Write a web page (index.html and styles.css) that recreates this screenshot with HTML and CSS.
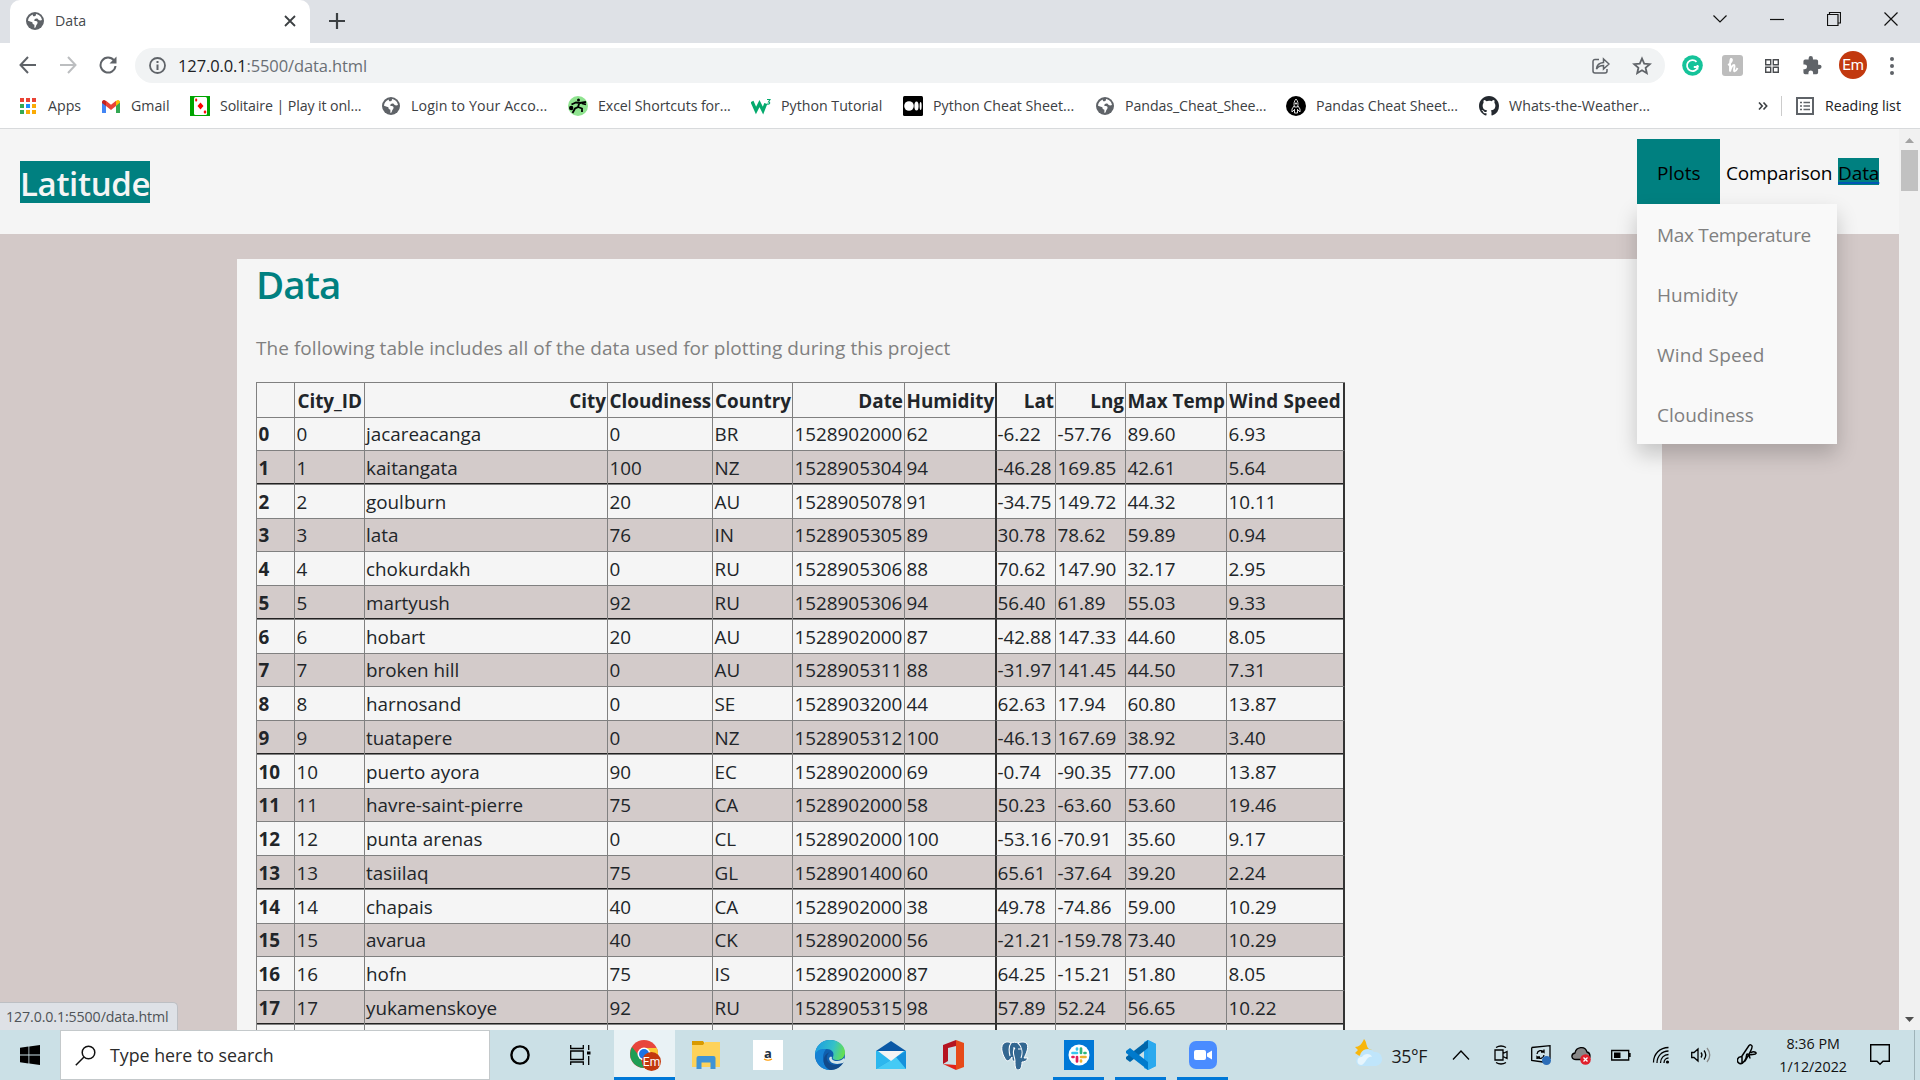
FILE: index.html
```html
<!DOCTYPE html>
<html lang="en">
<head>
<meta charset="utf-8">
<title>Data</title>
<link rel="stylesheet" href="styles.css">
</head>
<body>
<svg width="0" height="0" class="defs">
  <symbol id="globe" viewBox="0 0 18 18"><circle cx="9" cy="9" r="9" fill="#5f6368"/><path d="M10 2c3 .3 5.600 3 6 6-2 .8-3.500.3-4.200-1-.8-1-2.500-.4-3.300.4-.8 1 .2 1.600 1.300 1.700 1.500.1 2.200.9 1.600 2.400-.5 1.200-1.200 1.300-1.500 2.800-.1 1-.7 1.700-1.500 1.700v-3.200c-1.800-.6-2-1.500-2-2.600L2 8.800C2 6 4 3.200 7 2.400 6.400 4 7.600 4.600 8.600 4.300 9.800 4 10 3 10 2z" fill="#fff"/></symbol>
</svg>
<div class="screen">
  <header class="tabstrip">
    <div class="tab">
      <svg class="tab-icon" width="18" height="18"><use href="#globe"/></svg>
      <span class="tab-title">Data</span>
      <svg width="12" height="12" viewBox="0 0 12 12" stroke="#3c4043" stroke-width="1.800"><path d="M1 1l10 10M11 1L1 11"/></svg>
    </div>
    <svg class="newtab" width="16" height="16" viewBox="0 0 16 16" stroke="#3c4043" stroke-width="2.200"><path d="M8 0v16M0 8h16"/></svg>
    <div class="window-buttons">
      <svg width="14" height="14" viewBox="0 0 14 14"><path d="M.5 3.500L7 10l6.500-6.500"/></svg>
      <svg width="14" height="14" viewBox="0 0 14 14"><path d="M0 7.500h14"/></svg>
      <svg width="14" height="14" viewBox="0 0 14 14"><path d="M.5 2.500h10.500v11H.5zM2.500 2.500V.5h11V11H11"/></svg>
      <svg width="14" height="14" viewBox="0 0 14 14"><path d="M.5.5l13 13M13.500.5l-13 13"/></svg>
    </div>
  </header>

  <div class="toolbar">
    <svg class="back" width="18" height="18" viewBox="0 0 18 18"><path d="M17 9H2M9 1L1.500 9 9 17"/></svg>
    <svg class="forward" width="18" height="18" viewBox="0 0 18 18"><path d="M1 9h15M9 1l7.500 8L9 17"/></svg>
    <svg class="reload" width="18" height="18" viewBox="0 0 18 18"><path d="M15 4.500A7.500 7.500 0 1 0 16.500 10"/><path d="M17.500.5v7h-7z" class="solid"/></svg>
    <div class="omnibox">
      <svg width="17" height="17" viewBox="0 0 17 17"><circle cx="8.500" cy="8.500" r="7.500" fill="none" stroke="#5f6368" stroke-width="1.800"/><path d="M7.500 4h2v2h-2zM7.500 7.500h2V13h-2z" fill="#5f6368"/></svg>
      <span class="url"><b>127.0.0.1</b>:5500/data.html</span>
      <svg class="share" width="18" height="18" viewBox="0 0 18 18"><path d="M7 2.500H3a2 2 0 0 0-2 2V14a2 2 0 0 0 2 2h10a2 2 0 0 0 2-2v-2M4.500 12c.3-4 2.500-6.200 7-6.500V2l5.500 5-5.500 5V8.500c-3.500 0-5.500 1.200-7 3.500z"/></svg>
      <svg class="star" width="20" height="20" viewBox="0 0 20 20"><path d="M10 2.500l2.200 5.100 5.600.5-4.200 3.700 1.200 5.400-4.800-2.900-4.800 2.900 1.200-5.400-4.200-3.700 5.600-.5z"/></svg>
    </div>
    <svg class="ext" width="21" height="21" viewBox="0 0 21 21"><circle cx="10.500" cy="10.500" r="10.300" fill="#15c39a"/><path d="M14.500 6.800A5.500 5.500 0 1 0 15.800 12h-4M15.500 10v4.500" fill="none" stroke="#fff" stroke-width="1.800"/></svg>
    <svg class="ext" width="21" height="21" viewBox="0 0 21 21"><rect width="21" height="21" rx="3" fill="#bdbdbd"/><path d="M6 10c2-1 5-5 3.500-6S8 9 8 16.500c1-4 2.500-6.500 4-6.500s-1 6 .5 6.200S15 14 15.500 13" fill="none" stroke="#fff" stroke-width="1.900"/></svg>
    <svg class="ext" width="14" height="14" viewBox="0 0 14 14" fill="none" stroke="#4a4d50" stroke-width="1.400"><path d="M.7.7h5v5h-5zM8.300.7h5v5h-5zM.7 8.300h5v5h-5zM8.300 8.300h5v5h-5z"/></svg>
    <svg class="ext" width="19" height="19" viewBox="2 1 21 22"><path fill="#5f6368" d="M20.500 11H19V7a2 2 0 0 0-2-2h-4V3.500a2.500 2.500 0 0 0-5 0V5H4a2 2 0 0 0-2 2v3.800h1.500a2.700 2.700 0 0 1 0 5.400H2V20a2 2 0 0 0 2 2h3.800v-1.500a2.700 2.700 0 0 1 5.400 0V22H17a2 2 0 0 0 2-2v-4h1.500a2.500 2.500 0 0 0 0-5z"/></svg>
    <span class="avatar">Em</span>
    <svg class="dots" width="4" height="18" viewBox="0 0 4 18" fill="#5f6368"><circle cx="2" cy="2" r="2"/><circle cx="2" cy="9" r="2"/><circle cx="2" cy="16" r="2"/></svg>
  </div>

  <nav class="bookmarks">
    <a class="bm apps"><svg width="20" height="20" viewBox="0 0 20 20"><path fill="#ea4335" d="M2 2h4v4H2zM8 2h4v4H8zM14 2h4v4h-4z"/><path fill="#34a853" d="M2 8h4v4H2zM2 14h4v4H2z"/><path fill="#1a8cff" d="M8 8h4v4H8z"/><path fill="#fbab05" d="M14 8h4v4h-4zM8 14h4v4H8zM14 14h4v4h-4z"/></svg><span>Apps</span></a>
    <a class="bm gmail"><svg width="20" height="20" viewBox="0 0 20 20"><path fill="#4285f4" d="M1 5v12h4V9z"/><path fill="#34a853" d="M15 9v8h4V5z"/><path fill="#fbbc04" d="M15 5c2-2 4-1 4 1.500L15 10z"/><path fill="#c5221f" d="M1 6.500C1 4 3 3 5 5v5L1 7z"/><path fill="#ea4335" d="M5 4.800l5 3.900 5-3.900V10l-5 4-5-4z"/></svg><span>Gmail</span></a>
    <a class="bm solitaire"><svg width="20" height="20" viewBox="0 0 20 20"><path fill="#00a400" d="M0 0h20v20H0z"/><rect x="4" y="1" width="13" height="18" rx="1.500" fill="#fff"/><path fill="#f00" d="M10.500 6.500l3 3.500-3 3.500-3-3.500zM6 2l1.500 2L6 6 5 4zM15 14l1.500 2-1.500 2-1.500-2z"/></svg><span>Solitaire | Play it onl...</span></a>
    <a class="bm login"><svg width="20" height="20" viewBox="0 0 20 20"><use href="#globe" x="1" y="1" width="18" height="18"/></svg><span>Login to Your Acco...</span></a>
    <a class="bm excel"><svg width="20" height="20" viewBox="0 0 20 20"><circle cx="10" cy="10" r="10" fill="#8fe38f"/><circle cx="3.200" cy="12" r="2.200"/><circle cx="10.500" cy="4" r="1.500"/><path d="M3.500 8.500L8 6.500l4 .5 6-1M14 7.500l4 1M11.500 6.500L10 11l-3 1.500L4.500 17M10 11l4 1.500v3.500" stroke="#000" stroke-width="1.800" fill="none"/></svg><span>Excel Shortcuts for...</span></a>
    <a class="bm w3"><svg width="20" height="20" viewBox="0 0 20 20"><path d="M1 5.500l4 9 3.500-7 3.500 7 2.800-7" fill="none" stroke="#04aa6d" stroke-width="3.200"/><path d="M16 3.500h3L17.500 6c2 0 1.500 2.500-1.500 2" fill="none" stroke="#04aa6d" stroke-width="1.100"/></svg><span>Python Tutorial</span></a>
    <a class="bm medium"><svg width="20" height="20" viewBox="0 0 20 20"><rect width="20" height="20" rx="1.500"/><circle cx="6" cy="10" r="4.800" fill="#fff"/><ellipse cx="13.500" cy="10" rx="2.100" ry="4.600" fill="#fff"/><ellipse cx="17.600" cy="10" rx="1" ry="4" fill="#fff"/></svg><span>Python Cheat Sheet...</span></a>
    <a class="bm pdf"><svg width="20" height="20" viewBox="0 0 20 20"><use href="#globe" x="1" y="1" width="18" height="18"/></svg><span>Pandas_Cheat_Shee...</span></a>
    <a class="bm pandas"><svg width="20" height="20" viewBox="0 0 20 20"><circle cx="10" cy="10" r="10"/><path d="M10 3c2 2 2.500 5 1.500 8h-3C7.500 8 8 5 10 3zM8 10l-2 3v3l2-2M12 10l2 3v3l-2-2M8.500 13v4h3v-4" fill="none" stroke="#ddd"/><circle cx="10" cy="7.500" r="1.100" fill="#ddd"/></svg><span>Pandas Cheat Sheet...</span></a>
    <a class="bm github"><svg width="20" height="20" viewBox="0 0 16 16"><path fill="#24292f" fill-rule="evenodd" d="M8 0C3.580 0 0 3.580 0 8c0 3.540 2.290 6.530 5.470 7.590.4.070.55-.17.55-.38 0-.19-.01-.82-.01-1.490-2.010.37-2.530-.49-2.690-.94-.09-.23-.48-.94-.82-1.130-.28-.15-.68-.52-.01-.53.63-.01 1.080.58 1.230.82.72 1.210 1.870.87 2.330.66.070-.52.280-.87.510-1.070-1.780-.2-3.640-.89-3.640-3.950 0-.87.310-1.590.82-2.150-.08-.2-.36-1.020.08-2.120 0 0 .67-.21 2.200.82A7.600 7.600 0 0 1 8 3.860c.68 0 1.360.09 2 .27 1.530-1.040 2.200-.82 2.200-.82.44 1.100.16 1.920.08 2.120.51.56.82 1.270.82 2.150 0 3.070-1.870 3.750-3.650 3.950.29.25.54.73.54 1.480 0 1.070-.01 1.930-.01 2.200 0 .21.15.46.55.38A8.010 8.010 0 0 0 16 8c0-4.420-3.580-8-8-8z"/></svg><span>Whats-the-Weather...</span></a>
    <svg class="more" width="10" height="8" viewBox="0 0 10 8" fill="none" stroke="#3c4043" stroke-width="1.600"><path d="M1 .5L4.200 4 1 7.500M5.500.5L8.700 4 5.500 7.500"/></svg>
    <a class="bm reading"><svg width="20" height="20" viewBox="0 0 20 20"><path d="M2 2h16v16H2z" fill="none" stroke="#5f6368" stroke-width="2"/><path d="M5 6.500h2M8.500 6.500H15M5 10h2M8.500 10H15M5 13.500h2M8.500 13.500H15" stroke="#5f6368" stroke-width="1.700"/></svg><span>Reading list</span></a>
  </nav>

  <div class="viewport">
    <div class="page">
      <div class="site-nav">
        <span class="brand">Latitude</span>
        <div class="links">
          <div class="dropdown">
            <div class="plots">Plots</div>
            <div class="menu"><a class="temperature">Max Temperature</a><a>Humidity</a><a class="wind">Wind Speed</a><a>Cloudiness</a></div>
          </div>
          <a class="comparison">Comparison</a>
          <a class="current">Data</a>
        </div>
      </div>
      <main class="container">
        <h1>Data</h1>
        <p>The following table includes all of the data used for plotting during this project</p>
        <table>
          <thead><tr><th></th><th>City_ID</th><th>City</th><th>Cloudiness</th><th>Country</th><th>Date</th><th>Humidity</th><th>Lat</th><th>Lng</th><th>Max Temp</th><th>Wind Speed</th></tr></thead>
          <tbody>
          <tr><th>0</th><td>0</td><td>jacareacanga</td><td>0</td><td>BR</td><td>1528902000</td><td>62</td><td>-6.22</td><td>-57.76</td><td>89.60</td><td>6.93</td></tr>
          <tr><th>1</th><td>1</td><td>kaitangata</td><td>100</td><td>NZ</td><td>1528905304</td><td>94</td><td>-46.28</td><td>169.85</td><td>42.61</td><td>5.64</td></tr>
          <tr><th>2</th><td>2</td><td>goulburn</td><td>20</td><td>AU</td><td>1528905078</td><td>91</td><td>-34.75</td><td>149.72</td><td>44.32</td><td>10.11</td></tr>
          <tr><th>3</th><td>3</td><td>lata</td><td>76</td><td>IN</td><td>1528905305</td><td>89</td><td>30.78</td><td>78.62</td><td>59.89</td><td>0.94</td></tr>
          <tr><th>4</th><td>4</td><td>chokurdakh</td><td>0</td><td>RU</td><td>1528905306</td><td>88</td><td>70.62</td><td>147.90</td><td>32.17</td><td>2.95</td></tr>
          <tr><th>5</th><td>5</td><td>martyush</td><td>92</td><td>RU</td><td>1528905306</td><td>94</td><td>56.40</td><td>61.89</td><td>55.03</td><td>9.33</td></tr>
          <tr><th>6</th><td>6</td><td>hobart</td><td>20</td><td>AU</td><td>1528902000</td><td>87</td><td>-42.88</td><td>147.33</td><td>44.60</td><td>8.05</td></tr>
          <tr><th>7</th><td>7</td><td>broken hill</td><td>0</td><td>AU</td><td>1528905311</td><td>88</td><td>-31.97</td><td>141.45</td><td>44.50</td><td>7.31</td></tr>
          <tr><th>8</th><td>8</td><td>harnosand</td><td>0</td><td>SE</td><td>1528903200</td><td>44</td><td>62.63</td><td>17.94</td><td>60.80</td><td>13.87</td></tr>
          <tr><th>9</th><td>9</td><td>tuatapere</td><td>0</td><td>NZ</td><td>1528905312</td><td>100</td><td>-46.13</td><td>167.69</td><td>38.92</td><td>3.40</td></tr>
          <tr><th>10</th><td>10</td><td>puerto ayora</td><td>90</td><td>EC</td><td>1528902000</td><td>69</td><td>-0.74</td><td>-90.35</td><td>77.00</td><td>13.87</td></tr>
          <tr><th>11</th><td>11</td><td>havre-saint-pierre</td><td>75</td><td>CA</td><td>1528902000</td><td>58</td><td>50.23</td><td>-63.60</td><td>53.60</td><td>19.46</td></tr>
          <tr><th>12</th><td>12</td><td>punta arenas</td><td>0</td><td>CL</td><td>1528902000</td><td>100</td><td>-53.16</td><td>-70.91</td><td>35.60</td><td>9.17</td></tr>
          <tr><th>13</th><td>13</td><td>tasiilaq</td><td>75</td><td>GL</td><td>1528901400</td><td>60</td><td>65.61</td><td>-37.64</td><td>39.20</td><td>2.24</td></tr>
          <tr><th>14</th><td>14</td><td>chapais</td><td>40</td><td>CA</td><td>1528902000</td><td>38</td><td>49.78</td><td>-74.86</td><td>59.00</td><td>10.29</td></tr>
          <tr><th>15</th><td>15</td><td>avarua</td><td>40</td><td>CK</td><td>1528902000</td><td>56</td><td>-21.21</td><td>-159.78</td><td>73.40</td><td>10.29</td></tr>
          <tr><th>16</th><td>16</td><td>hofn</td><td>75</td><td>IS</td><td>1528902000</td><td>87</td><td>64.25</td><td>-15.21</td><td>51.80</td><td>8.05</td></tr>
          <tr><th>17</th><td>17</td><td>yukamenskoye</td><td>92</td><td>RU</td><td>1528905315</td><td>98</td><td>57.89</td><td>52.24</td><td>56.65</td><td>10.22</td></tr>
          <tr><th></th><td></td><td></td><td></td><td></td><td></td><td></td><td></td><td></td><td></td><td></td></tr>
          </tbody>
        </table>
      </main>
    </div>
    <div class="scrollbar">
      <svg width="9" height="5" viewBox="0 0 9 5" fill="#a3a3a3"><path d="M0 5l4.500-5L9 5z"/></svg>
      <div class="thumb"></div>
      <svg class="down" width="9" height="5" viewBox="0 0 9 5" fill="#505050"><path d="M0 0l4.500 5L9 0z"/></svg>
    </div>
    <div class="status">127.0.0.1:5500/data.html</div>
  </div>

  <footer class="taskbar">
    <div class="start"><svg width="20" height="20" viewBox="0 0 20 20"><path d="M0 2.800l8.500-1.200v8H0zM9.300 1.500L20 0v9.600H9.300zM0 10.400h8.500v8L0 17.200zM9.300 10.400H20V20L9.300 18.500z"/></svg></div>
    <div class="search"><svg width="21" height="21" viewBox="0 0 21 21" fill="none" stroke="#111" stroke-width="1.500"><circle cx="13.500" cy="7.500" r="6.300"/><path d="M9 12L.8 20.200"/></svg><span>Type here to search</span></div>
    <div class="cell cortana"><svg width="20" height="20" viewBox="0 0 20 20"><circle cx="10" cy="10" r="8.600" fill="none" stroke="#000" stroke-width="2.400"/></svg></div>
    <div class="cell tasks"><svg width="21" height="20" viewBox="0 0 21 20" fill="none" stroke="#000" stroke-width="1.300"><path d="M.7 0v3.500h12.600V0M.7 6h12.600v8.500H.7zM.7 20v-3h12.600v3M18.700 0v5M18.700 11v9"/><path d="M17 6.500h3.500v3H17z" fill="#000" stroke="none"/></svg></div>
    <div class="cell active"><svg width="32" height="32" viewBox="0 0 32 32"><circle cx="15" cy="15" r="14" fill="#e8453c"/><path d="M3 8l8 10 4 11A14 14 0 0 1 3 8z" fill="#1e9e55"/><path d="M15 9h12.700A14 14 0 0 1 15 29l6-11z" fill="#fcc934"/><circle cx="15" cy="15" r="6.500" fill="#fff"/><circle cx="15" cy="15" r="5" fill="#1a73e8"/><circle cx="22.500" cy="22.500" r="9.500" fill="#c2390f"/><text x="22.500" y="27" text-anchor="middle" font-size="12" font-family="Roboto, sans-serif" fill="#fff">Em</text></svg></div>
    <div class="cell"><svg width="28" height="28" viewBox="0 0 28 28"><path d="M0 0h11l2 3-2 3H0z" fill="#d99a00"/><path d="M0 4h11l2-3h15v25H0z" fill="#fdd25a"/><path d="M4.500 28V17q0-2 2-2h15q2 0 2 2v11h-5v-6.500h-9V28z" fill="#3f93d6"/></svg></div>
    <div class="cell"><svg width="30" height="30" viewBox="0 0 30 30"><path d="M0 0h30v30H0z" fill="#fff"/><text x="15" y="18" text-anchor="middle" font-size="13" font-weight="bold" font-family="Open Sans, sans-serif" fill="#232f3e">a</text><path d="M11 19q4 2.500 8 0" stroke="#f90" fill="none" stroke-width="1.200"/></svg></div>
    <div class="cell"><svg width="30" height="30" viewBox="0 0 30 30"><defs><linearGradient id="eg" x1="0" x2="1" y1=".3" y2=".5"><stop offset="0" stop-color="#1b9de2"/><stop offset=".6" stop-color="#35c1c8"/><stop offset="1" stop-color="#66e04f"/></linearGradient></defs><circle cx="15" cy="15" r="15" fill="#0f5fae"/><path d="M0 15C0 6 7 0 15 0c9 0 15 6 15 12.500 0 5-4 7.500-8 7.500-3 0-5-1-4-3 2-5-2-8-6-8-6 0-10 3-12 6z" fill="url(#eg)"/><path d="M0 14c2-4 7-6 11-4.500C7 13 6 25 15 30 6 30 0 23 0 14z" fill="#1682d4"/><path d="M15 12c-6 4-3 13 5 13 4 0 6-1 8-3l.5.500C26 27 21 30 16 30 7 28 6 15 15 12z" fill="#114a8b"/><path d="M17 17c-1 2 1 4 5 4 3 0 5-1 7-3l1 2-2 3c-3 1-10 2-13-2-2-3 0-5 2-4z" fill="#d1e4e9"/></svg></div>
    <div class="cell"><svg width="30" height="28" viewBox="0 0 30 28"><path d="M0 10L15 0l15 10z" fill="#0a58a5"/><path d="M0 10h30v18H0z" fill="#2cb7ee"/><path d="M0 28l30-18v18z" fill="#1591dc"/><path d="M0 28L20 16l10 12z" fill="#45caf5"/><path d="M2 10h26L15 20z" fill="#f4f4f4"/></svg></div>
    <div class="cell"><svg width="24" height="30" viewBox="0 0 24 30"><path d="M15 0l8 3v24l-8 3z" fill="#e64a19"/><path d="M15 0L2 5v19l5-3V8l8-2z" fill="#b51420"/><path d="M2 24l13 1v5z" fill="#e2231a"/></svg></div>
    <div class="cell"><svg width="28" height="29" viewBox="0 0 28 29"><path d="M2 3c3-3 6-2 8-1 2-1 5-1 7 0 3-1 7-2 9 1 2 4-1 10-3 14h4c-1 3-4 4-6 4 0 4-1 8-4 8s-3-5-3-9c-3 1-3-2-3-4-2 3-4 5-6 3C2 15-1 7 2 3z" fill="#336791" stroke="#fff"/><path d="M10 2C7 6 8 11 9 15M17 2c4 4 5 10 3 15M14 7c-4 3 0 9 0 13M12 7h2M17 8h3" stroke="#fff" fill="none" stroke-width="1.100"/></svg></div>
    <div class="cell running slack"><svg width="30" height="30" viewBox="0 0 30 30"><path d="M0 0h30v30H0z" fill="#0078d7"/><circle cx="15" cy="15" r="10.500" fill="#fff"/><g stroke-width="2.700" stroke-linecap="round"><path d="M8.500 13h4.500M13 8.500v1" stroke="#36c5f0"/><path d="M17 8.500V13M20.500 13h1" stroke="#2eb67d"/><path d="M17 17h4.500M17 20.500v1" stroke="#ecb22e"/><path d="M13 17v4.500M8.500 17h1" stroke="#e01e5a"/></g></svg></div>
    <div class="cell running"><svg width="30" height="30" viewBox="0 0 30 30"><path d="M22 0l8 4v22l-8 4-4-2V2z" fill="#22a5f1"/><path d="M22 0v8L4 22l-4-3v-2z" fill="#0065a9"/><path d="M22 30v-8L4 8l-4 3v2z" fill="#007acc"/><path d="M22 0l8 4v22l-8 4z" fill="#2ba9ee"/></svg></div>
    <div class="cell running"><svg width="28" height="28" viewBox="0 0 28 28"><rect width="28" height="28" rx="7" fill="#4a8cff"/><rect x="5" y="9" width="12" height="10" rx="2" fill="#fff"/><path d="M18 12.500l5-3v9l-5-3z" fill="#fff"/></svg></div>

    <div class="weather"><svg width="28" height="28" viewBox="0 0 28 28"><path d="M10 0c3 3 2 8 5 10l3 1-8 9-9-6 3-3-3-3c4 0 7-3 9-8z" fill="#f8b60c"/><path d="M6 27a5.500 5.500 0 0 1 0-10.500A8 8 0 0 1 20 13a7 7 0 0 1 2 14z" fill="#bfe5fb"/><path d="M7 26a4 4 0 0 1 1-8c2-4 9-4 10 0-5-2-7 8-11 8z" fill="#e6f5fd"/></svg><span>35°F</span></div>
    <div class="tray">
      <svg width="20" height="20" viewBox="0 0 20 20"><path d="M2 14.500L10 6l8 8.500"/></svg>
      <svg width="20" height="20" viewBox="0 0 20 20"><path d="M4 5h8v10H4zM12 8.500l4-2v7l-4-2M5 2.500q5-3 10 0M5 17.500q5 3 10 0"/></svg>
      <svg width="20" height="20" viewBox="0 0 20 20"><path d="M.7 2.500L19 .7V14M.7 2.500v13L12 17M6 9a4 4 0 0 1 7-2V4.500M13 7h-3M13 10a4 4 0 0 1-7 2v2M6 12h3"/><circle cx="15.500" cy="15.500" r="4.500" fill="#2b6db8" stroke="none"/></svg>
      <svg width="20" height="20" viewBox="0 0 20 20"><path d="M5 14.500C0 14.500-.5 9 4 8c1-6 10-8 12-1 4 1 4 7 0 7.500z" fill="#888"/><circle cx="14.500" cy="14.500" r="5.300" fill="#e0202c" stroke="none"/><path d="M12.500 12.500l4 4M16.500 12.500l-4 4" stroke="#fff"/></svg>
      <svg width="20" height="20" viewBox="0 0 20 20"><path d="M.7 5.500h17v9.500H.7zM19 8v4"/><path d="M3 7.500h6.500V13H3z" fill="#000" stroke="none"/></svg>
      <svg width="20" height="20" viewBox="0 0 20 20"><path d="M2.500 17.500C2.500 9 9 2.500 17.500 2.500M6 18C6 11 11 6 17.500 6M9.500 18c0-5 3.500-8.500 8-8.500M13 18c0-3 2-5 4.500-5"/><circle cx="16.500" cy="17" r="1.600" fill="#000" stroke="none"/></svg>
      <svg width="20" height="20" viewBox="0 0 20 20"><path d="M.7 7.500H3l4-3.500v12l-4-3.500H.7zM10 7.500q2 2.500 0 5M13 5.500q3.500 4.500 0 9"/><path d="M16 3q5.500 7 0 14" stroke="#888"/></svg>
      <svg class="pen" width="20" height="22" viewBox="0 0 20 22"><path d="M5 12L12 1.500q2-1.500 3 .5T8 17l-3 2zM13.500 9c3-2 6-1 5.500.5S14 10 12.500 11M5 13c-5-1-6 5-2.500 6.500 4 1 7-5 7-8s3-1 3.500 3" stroke-width="1.500"/></svg>
    </div>
    <div class="clock"><span>8:36 PM</span><span>1/12/2022</span></div>
    <svg class="notice" width="20" height="22" viewBox="0 0 20 22"><path d="M.7.700h18.600v16.600H13l-3 3-3-3H.7z" fill="none" stroke="#000" stroke-width="1.400"/></svg>
    <span class="show-desktop"></span>
  </footer>
</div>
</body>
</html>
```
FILE: styles.css
```css
* { box-sizing: border-box; }
body { margin: 0; font-family: "Open Sans", "Noto Sans", sans-serif; overflow: hidden; }
svg { display: block; flex: none; }
.defs { position: absolute; }
.screen { width: 1920px; height: 1080px; display: flex; flex-direction: column; overflow: hidden; }

.tabstrip { height: 43px; flex: none; background: #dee1e6; display: flex; align-items: center; padding-left: 10px; }
.tab { width: 300px; height: 43px; background: #fff; border-radius: 10px 10px 0 0; display: flex; align-items: center; padding: 0 14px 1px 16px; }
.tab-title { flex: 1; margin-left: 11px; padding-bottom: 1px; font-size: 14.200px; color: #45494d; }
.newtab { margin: 0 0 1px 19px; }
.window-buttons { margin-left: auto; display: flex; gap: 43px; padding: 0 22px 6px 0; fill: none; stroke: #111; stroke-width: 1.200; }

.toolbar { height: 44px; flex: none; background: #fff; display: flex; align-items: center; padding: 1px 0 0 19px; fill: none; stroke: none; }
.toolbar .back, .toolbar .forward, .toolbar .reload { stroke: #5f6368; stroke-width: 2; margin-bottom: 2px; }
.toolbar .forward { stroke: #bcbec0; margin-left: 22px; }
.toolbar .reload { margin-left: 22px; }
.toolbar .solid { fill: #5f6368; stroke: none; }
.omnibox { width: 1530px; height: 35px; margin-left: 18px; border-radius: 18px; background: #f1f3f4; display: flex; align-items: center; padding: 0 13px 0 14px; }
.url { margin-left: 12px; padding-bottom: 1px; flex: 1; font-size: 16.500px; letter-spacing: -.12px; color: #6a6f74; }
.url b { font-weight: 400; color: #202124; }
.share, .star { stroke: #5f6368; stroke-width: 1.500; }
.star { margin-left: 22px; stroke-width: 1.800; }
.ext { margin-left: 17px; }
.ext + .ext { margin-left: 19px; }
.ext + .ext + .ext { margin-left: 22px; }
.ext + .ext + .ext + .ext { margin-left: 24px; }
.avatar { width: 28px; height: 28px; margin: 0 0 2px 17px; border-radius: 50%; background: #c2390f; color: #fff; font: 15px/28px Roboto, sans-serif; text-align: center; }
.dots { margin-left: 23px; }

.bookmarks { height: 42px; flex: none; background: #fff; border-bottom: 1px solid #d8dadc; display: flex; align-items: center; padding: 0 0 3px 18px; }
.bm { display: flex; align-items: center; gap: 10px; font-size: 14.200px; color: #3c4043; white-space: nowrap; flex: none; }
.bm span { padding-bottom: 2px; }
.apps { width: 83px; }
.gmail { width: 89px; }
.solitaire { width: 191px; letter-spacing: -.1px; }
.login { width: 187px; letter-spacing: .12px; }
.excel { width: 183px; letter-spacing: -.08px; }
.w3 { width: 152px; }
.medium { width: 192px; }
.pdf { width: 191px; letter-spacing: -.08px; }
.pandas { width: 193px; letter-spacing: -.05px; }
.github { width: 279px; letter-spacing: .05px; }
.more { width: 10px; }
.reading { height: 20px; margin-left: 13px; padding-left: 13px; border-left: 1px solid #ccc; color: #202124; }

.viewport { height: 901px; flex: none; display: flex; position: relative; overflow: hidden; background: #f5f5f5; }
.page { width: 1899px; background: #d3c9c8; overflow: hidden; }
.site-nav { height: 105px; background: #f5f5f5; display: flex; align-items: flex-start; justify-content: space-between; padding: 10px 20px 0; }
.brand { margin-top: 22px; width: 130px; height: 42px; background: #008080; color: #f5f5f5; font-size: 33px; font-weight: 600; line-height: 46px; letter-spacing: -.35px; }
.links { display: flex; align-items: flex-start; font-size: 19px; line-height: 27px; color: #000; }
.dropdown { position: relative; }
.plots { width: 83px; height: 65px; padding: 21px 20px; background: #008080; }
.menu { position: absolute; left: 0; top: 65px; width: 200px; background: #f9f9f9; box-shadow: 0 10px 20px rgba(0,0,0,.2); color: #808080; z-index: 2; }
.menu a { display: block; height: 60px; padding: 18px 0 0 20px; white-space: nowrap; }
.menu .temperature { letter-spacing: -.32px; }
.menu .wind { letter-spacing: .2px; }
.comparison { width: 112px; margin: 21px 0 0 6px; letter-spacing: -.15px; }
.current { width: 41px; height: 27px; margin-top: 19px; background: #008080; text-decoration: underline #0056b3 2px; text-underline-offset: 2px; line-height: 31px; letter-spacing: -.1px; }

.container { width: 1425px; height: 900px; margin: 25px 0 0 237px; padding: 0 19px; background: #f5f5f5; }
h1 { margin: 0; height: 74px; color: #008080; font-size: 38.500px; font-weight: 600; line-height: 51px; letter-spacing: -.9px; }
p { margin: 0; height: 49px; color: #808080; font-size: 19px; line-height: 30px; letter-spacing: .045px; }
table { display: block; width: 1089px; border-top: 1px solid #808080; color: #212529; font-size: 18.850px; }
thead, tbody { display: block; }
tr { display: grid; height: 33.750px; grid-template-columns: 38px 70px 243px 105px 80px 112px 91px 60px 70px 101px 119px; }
th, td { border-left: 1px solid #808080; border-bottom: 1px solid #808080; padding: 2.300px 1px 0 1.500px; line-height: 31px; white-space: nowrap; text-align: left; }
th { font-weight: 700; letter-spacing: -.05px; }
thead th { text-align: right; letter-spacing: 0; padding-top: 3px; }
thead th:nth-child(2), thead th:last-child { padding-right: 2px; }
thead th:last-child { letter-spacing: .2px; }
td:nth-child(3) { padding-left: 1px; }
th:nth-child(8), td:nth-child(8) { border-left: 2px solid #333; padding-left: .5px; }
th:last-child, td:last-child { border-right: 2px solid #333; }
tbody tr:nth-child(even) { background: #d3cbca; }
tbody tr:nth-child(4n+2) { border-bottom: 1px solid #222; }

.scrollbar { width: 21px; background: #f1f1f1; display: flex; flex-direction: column; align-items: center; padding: 9px 0 8px; }
.thumb { width: 17px; height: 41px; margin-top: 7px; background: #c1c1c1; }
.down { margin-top: auto; }
.status { position: absolute; left: 0; bottom: 0; width: 178px; height: 28px; padding-left: 6px; background: #dee1e6; border: 1px solid #bdbfc3; border-width: 1px 1px 0 0; border-radius: 0 5px 0 0; color: #4f5357; font-size: 14.200px; line-height: 27px; letter-spacing: -.1px; }

.taskbar { height: 50px; flex: none; background: #cbe0e6; display: flex; align-items: center; }
.start { width: 60px; padding-left: 20px; }
.search { width: 430px; height: 50px; background: #fff; border: 1px solid #c4c9cb; display: flex; align-items: center; gap: 14px; padding-left: 14px; color: #2b2b2b; font-size: 17.800px; }
.cell { width: 61.700px; height: 50px; display: flex; align-items: center; justify-content: center; }
.cortana { padding-right: 2px; }
.tasks { width: 62px; padding-right: 4px; }
.active { background: #e9f2f5; border-bottom: 3px solid #0078d7; padding-top: 3px; }
.running { width: 51px; margin: 0 5.500px; border-bottom: 3px solid #0078d7; padding-top: 3px; }
.slack { margin-left: 7.500px; }
.weather { margin-left: 120px; width: 97px; display: flex; align-items: center; gap: 10px; font-size: 17.800px; color: #1b1b1b; }
.weather span { letter-spacing: -.4px; padding-top: 1px; }
.weather svg { margin-top: -4px; }
.tray { display: flex; align-items: center; gap: 20.100px; fill: none; stroke: #000; stroke-width: 1.300; }
.pen { margin-left: 6px; }
.clock { width: 90px; margin-left: 11px; display: flex; flex-direction: column; align-items: center; font-size: 14.300px; line-height: 23px; color: #111; }
.notice { margin-left: 12px; }
.show-desktop { width: 1px; height: 50px; margin-left: auto; margin-right: 5px; background: #9fb3b9; }
```
